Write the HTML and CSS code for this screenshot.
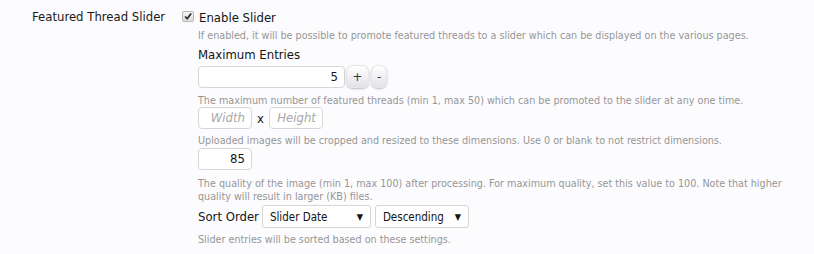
FILE: index.html
```html
<!DOCTYPE html>
<html>
<head>
<meta charset="utf-8">
<link rel="stylesheet" href="styles.css">
</head>
<body>
<dl class="ctrl-unit">
  <dt class="ctrl-label">Featured Thread Slider</dt>
  <dd class="ctrl-body">
    <label class="check-row">
      <span class="checkbox"><svg viewBox="0 0 12 11" width="12" height="11"><path d="M2.5 5.5 L5 8.2 L9.8 1.8" fill="none" stroke="#2a2a2a" stroke-width="2.1"/></svg></span>
      <span class="check-text">Enable Slider</span>
    </label>
    <div class="dependent">
      <p class="explain first">If enabled, it will be possible to promote featured threads to a slider which can be displayed on the various pages.</p>
      <div class="field-label">Maximum Entries</div>
      <div class="spin-row">
        <div class="text-input wide num">5</div>
        <div class="spin-btn">+</div>
        <div class="spin-btn minus">-</div>
      </div>
      <p class="explain">The maximum number of featured threads (min 1, max 50) which can be promoted to the slider at any one time.</p>
      <div class="dims-row">
        <div class="text-input small placeholder">Width</div>
        <span class="times">x</span>
        <div class="text-input small placeholder">Height</div>
      </div>
      <p class="explain">Uploaded images will be cropped and resized to these dimensions. Use 0 or blank to not restrict dimensions.</p>
      <div class="text-input small num quality">85</div>
      <p class="explain two-line">The quality of the image (min 1, max 100) after processing. For maximum quality, set this value to 100. Note that higher quality will result in larger (KB) files.</p>
      <div class="sort-row">
        <span class="sort-label">Sort Order</span>
        <div class="select s1"><span>Slider Date</span><span class="arrow">&#9660;</span></div>
        <div class="select s2"><span>Descending</span><span class="arrow">&#9660;</span></div>
      </div>
      <p class="explain last">Slider entries will be sorted based on these settings.</p>
    </div>
  </dd>
</dl>
</body>
</html>
```
FILE: styles.css
```css
html, body {
  margin: 0;
  padding: 0;
  background: #fcfcff;
}
body {
  font-family: "DejaVu Sans Condensed", "DejaVu Sans", sans-serif;
  color: #141414;
  width: 814px;
  height: 254px;
  overflow: hidden;
}
.ctrl-unit {
  display: flex;
  margin: 0;
  padding-top: 9px;
}
.ctrl-label {
  width: 166px;
  box-sizing: border-box;
  padding-left: 32px;
  font-size: 13px;
  line-height: 16px;
  margin: 0;
  color: #1a1a1a;
}
.ctrl-body {
  margin: 0;
  padding-left: 16px;
  flex: 1;
}
.check-row {
  display: flex;
  align-items: center;
  height: 16px;
}
.checkbox {
  width: 12px;
  height: 11px;
  border: 1px solid #b8b8b8;
  border-radius: 2px;
  background: linear-gradient(#f4f4f4, #dcdcdc);
  box-sizing: border-box;
  display: flex;
  align-items: center;
  justify-content: center;
  margin-top: -2px;
}
.checkbox svg { display: block; }
.check-text {
  margin-left: 5px;
  font-size: 13px;
}
.dependent {
  padding-left: 16px;
  max-width: 596px;
}
.explain {
  margin: 0;
  font-size: 10.7px;
  line-height: 13px;
  color: #969696;
}
.explain.first { margin-top: 4px; }
.field-label {
  font-size: 13px;
  line-height: 16px;
  margin-top: 5px;
}
.spin-row {
  display: flex;
  align-items: center;
  margin-top: 2px;
  margin-bottom: 6px;
}
.text-input {
  background: #fff;
  border: 1px solid #d6d6d6;
  border-radius: 4px;
  height: 22px;
  box-sizing: border-box;
  font-size: 13px;
  line-height: 20px;
  padding: 0 6px;
}
.num { text-align: right; }
.wide { width: 147px; }
.small { width: 54px; text-align: right; }
.placeholder {
  color: #a8a8a8;
  font-style: italic;
}
.spin-btn {
  width: 23px;
  height: 23px;
  margin-left: 1px;
  border-radius: 7px;
  background: linear-gradient(#ffffff, #e2e2e8);
  box-shadow: 0 1px 2px rgba(0,0,0,0.25);
  font-size: 13px;
  line-height: 21px;
  text-align: center;
  color: #333;
  box-sizing: border-box;
  border: 1px solid #e6e6ea;
}
.spin-btn.minus { width: 16px; margin-left: 2px; }
.dims-row {
  display: flex;
  align-items: center;
  margin-top: 0;
  margin-bottom: 5px;
}
.times {
  font-size: 13px;
  margin: 0 5px 0 5px;
}
.quality { margin-top: 1px; margin-bottom: 7px; }
.sort-row {
  display: flex;
  align-items: center;
  margin-top: 2px;
  margin-bottom: 5px;
}
.sort-label {
  font-size: 13px;
  margin-right: 3px;
}
.select {
  display: flex;
  justify-content: space-between;
  align-items: center;
  background: #fff;
  border: 1px solid #d6d6d6;
  border-radius: 3px;
  height: 23px;
  box-sizing: border-box;
  font-size: 11.5px;
  padding: 0 7px 0 7px;
  color: #141414;
}
.s1 { width: 109px; }
.s2 { width: 94px; margin-left: 4px; }
.arrow { font-size: 9px; }
```
